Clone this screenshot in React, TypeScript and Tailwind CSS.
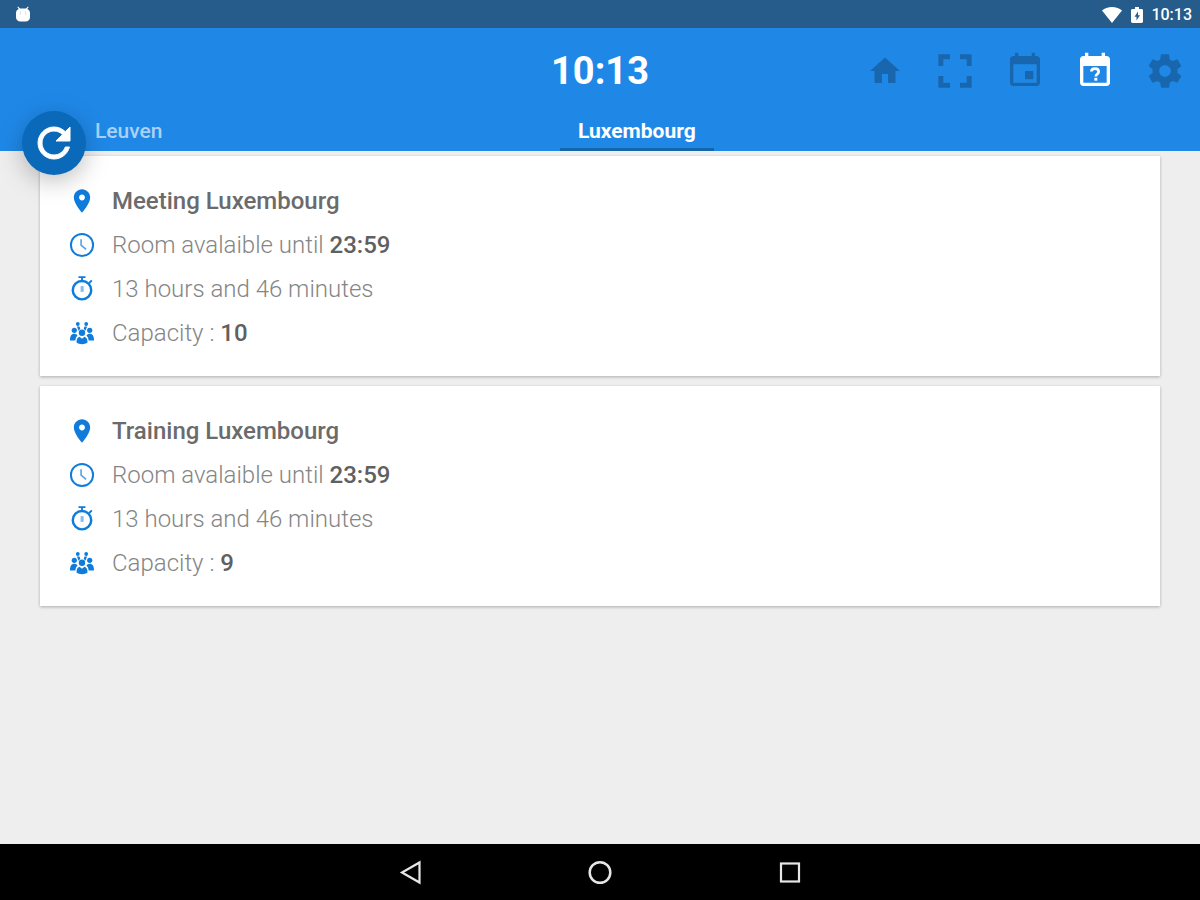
import React from 'react';

interface Room {
  name: string;
  until: string;
  duration: string;
  capacity: number;
}

const rooms: Room[] = [
  { name: 'Meeting Luxembourg', until: '23:59', duration: '13 hours and 46 minutes', capacity: 10 },
  { name: 'Training Luxembourg', until: '23:59', duration: '13 hours and 46 minutes', capacity: 9 },
];

const tabs = ['Leuven', 'Luxembourg'];

const Icon: React.FC<{ className: string; children: React.ReactNode }> = ({ className, children }) => (
  <svg viewBox="0 0 24 24" fill="currentColor" aria-hidden="true" className={className}>
    {children}
  </svg>
);

const StatusBar = () => (
  <div className="flex h-7 shrink-0 items-center justify-between bg-[#265c8b] pr-2 pl-[15px] text-white">
    <svg viewBox="0 0 16 16" fill="currentColor" aria-hidden="true" className="size-4">
      <path d="M3 0.5l2 2h6l2-2 .6.8-1.3 1.6C14 3.600 15 5 15 7v4c0 2.800-1.800 4.500-4.500 4.500h-5C2.800 15.500 1 13.800 1 11V7c0-2 1-3.400 2.700-4.100L2.400 1.300z" />
      <path d="M5.500 5v4M10.500 5v4" stroke="#dbe5ed" />
    </svg>
    <div className="flex items-center pt-[2px]">
      <svg viewBox="0 0 20 16" fill="currentColor" aria-hidden="true" className="mr-[9px] h-4 w-5">
        <path d="M10 16L0 3.500C2.600 1.300 6 0 10 0s7.400 1.300 10 3.500z" />
      </svg>
      <svg viewBox="0 0 12 16" fill="currentColor" aria-hidden="true" className="mr-2 h-4 w-3">
        <path d="M4 0h4v2h2.500c.8 0 1.500.6 1.500 1.400v11.200c0 .8-.7 1.400-1.500 1.400h-9C.7 16 0 15.400 0 14.600V3.400C0 2.600.7 2 1.500 2H4z" />
        <path d="M7 4.500L3.500 9.800h2V13.500L9 8.200H7z" fill="#265c8b" />
      </svg>
      <span className="text-[16px] font-medium">10:13</span>
    </div>
  </div>
);

const actions = [
  {
    label: 'Home',
    active: false,
    icon: (
      <Icon className="size-9">
        <path d="M10 20v-6h4v6h5v-8h3L12 3 2 12h3v8z" />
      </Icon>
    ),
  },
  {
    label: 'Full screen',
    active: false,
    icon: (
      <Icon className="size-10">
        <path d="M2 2h7v3H5v4H2zM15 2h7v7h-3V5h-4zM2 15h3v4h4v3H2zM19 15h3v7h-7v-3h4z" />
      </Icon>
    ),
  },
  {
    label: 'Event',
    active: false,
    icon: (
      <Icon className="size-10">
        <path d="M17 12h-5v5h5v-5zM16 1v2H8V1H6v2H5c-1.110 0-1.990.9-1.990 2L3 19c0 1.100.89 2 2 2h14c1.100 0 2-.9 2-2V5c0-1.100-.9-2-2-2h-1V1h-2zm3 18H5V8h14v11z" />
      </Icon>
    ),
  },
  {
    label: 'Available rooms',
    active: true,
    icon: (
      <Icon className="size-10">
        <path d="M16 1v2H8V1H6v2H5c-1.110 0-1.990.9-1.990 2L3 19c0 1.100.89 2 2 2h14c1.100 0 2-.9 2-2V5c0-1.100-.9-2-2-2h-1V1h-2zm3 18H5V9h14v10z" />
        <path d="M9.800 12.300c.1-1.100 1-1.700 2.200-1.700s2.200.7 2.200 1.800c0 1.300-1.700 1.400-1.700 2.900" fill="none" stroke="currentColor" strokeWidth="1.600" />
        <path d="M11.600 16.100h1.800v1.700h-1.800z" />
      </Icon>
    ),
  },
  {
    label: 'Settings',
    active: false,
    icon: (
      <Icon className="size-10">
        <path d="M19.430 12.980c.04-.32.07-.64.07-.98s-.03-.66-.07-.98l2.110-1.650c.19-.15.24-.42.12-.64l-2-3.460c-.12-.22-.39-.3-.61-.22l-2.490 1c-.52-.4-1.080-.73-1.690-.98l-.38-2.650C14.460 2.180 14.250 2 14 2h-4c-.25 0-.46.18-.49.42l-.38 2.650c-.61.25-1.170.59-1.690.98l-2.490-1c-.23-.09-.49 0-.61.22l-2 3.460c-.13.22-.07.49.12.64l2.110 1.650c-.04.32-.07.65-.07.98s.03.66.07.98l-2.110 1.650c-.19.15-.24.42-.12.64l2 3.460c.12.22.39.3.61.22l2.490-1c.52.4 1.080.73 1.690.98l.38 2.650c.03.24.24.42.49.42h4c.25 0 .46-.18.49-.42l.38-2.650c.61-.25 1.170-.59 1.690-.98l2.490 1c.23.09.49 0 .61-.22l2-3.460c.12-.22.07-.49-.12-.64l-2.110-1.650zM12 15.500c-1.930 0-3.500-1.570-3.500-3.500s1.570-3.500 3.500-3.500 3.500 1.570 3.500 3.500-1.570 3.500-3.500 3.500z" />
      </Icon>
    ),
  },
];

const Header = () => (
  <header className="relative z-10 shrink-0 bg-[#1f88e7] text-white">
    <div className="grid h-[86px] grid-cols-[1fr_auto_1fr] items-center">
      <h1 className="col-start-2 text-[38px] leading-10 font-bold">10:13</h1>
      <div className="flex justify-end">
        {actions.map((action) => (
          <button
            key={action.label}
            type="button"
            aria-label={action.label}
            className={`flex h-12 w-[70px] items-center justify-center ${action.active ? 'text-white' : 'text-[#1867ae]'}`}
          >
            {action.icon}
          </button>
        ))}
      </div>
    </div>

    <nav className="grid grid-cols-[43%_auto] pl-[77px]">
      {tabs.map((tab) => (
        <a
          key={tab}
          href={`#${tab}`}
          className={`h-[37px] justify-self-start border-b-[3px] px-[18px] text-[21px] leading-[34px] ${
            tab === 'Luxembourg' ? 'border-[#1565ab] font-bold text-white' : 'border-transparent font-medium text-[#a9d1f6]'
          }`}
        >
          {tab}
        </a>
      ))}
    </nav>

    {/* floating refresh button, overlaps the list */}
    <button
      type="button"
      aria-label="Refresh"
      className="absolute -bottom-6 left-[22px] flex size-16 items-center justify-center rounded-full bg-[#0b69ba] shadow-[0_6px_24px_rgba(0,0,0,0.25)]"
    >
      <Icon className="size-12">
        <path d="M17.650 6.350C16.200 4.900 14.210 4 12 4c-4.420 0-7.990 3.580-7.990 8s3.570 8 7.990 8c3.730 0 6.840-2.550 7.730-6h-2.080c-.82 2.330-3.040 4-5.650 4-3.310 0-6-2.690-6-6s2.690-6 6-6c1.660 0 3.140.69 4.220 1.780L13 11h7V4l-2.350 2.350z" stroke="currentColor" strokeWidth="0.500" />
      </Icon>
    </button>
  </header>
);

const PinIcon = () => (
  <Icon className="size-7">
    <path d="M12 2C8.130 2 5 5.130 5 9c0 5.250 7 13 7 13s7-7.750 7-13c0-3.870-3.130-7-7-7zm0 9.500c-1.380 0-2.500-1.120-2.500-2.500s1.120-2.500 2.500-2.500 2.500 1.120 2.500 2.500-1.120 2.500-2.500 2.500z" />
  </Icon>
);

const ClockIcon = () => (
  <Icon className="size-7">
    <circle cx="12" cy="12" r="9.500" fill="none" stroke="currentColor" strokeWidth="1.700" />
    <path d="M11.200 7v5.200l4.300 3.600" fill="none" stroke="currentColor" strokeWidth="1.400" opacity="0.7" />
  </Icon>
);

const TimerIcon = () => (
  <Icon className="size-7">
    <circle cx="12" cy="13" r="7.900" fill="none" stroke="currentColor" strokeWidth="2.100" />
    <path d="M9 1h6v1.600H9zM11.200 2.600h1.600v2h-1.600zM17.600 6.200l2.200-2.200 1.200 1.200L18.800 7.400z" />
    <path d="M10.800 9.500h2.600v5h-2.600z" opacity="0.5" />
  </Icon>
);

const PeopleIcon = () => (
  <Icon className="size-6">
    <circle cx="7.800" cy="3" r="1.900" />
    <circle cx="16.200" cy="3" r="1.900" />
    <path d="M6.900 5.400h2.600l.8 2.400-1.700 1.900zM17.100 5.400h-2.600l-.8 2.400 1.700 1.900z" />
    <circle cx="4.300" cy="9.300" r="2.600" />
    <circle cx="19.700" cy="9.300" r="2.600" />
    <circle cx="12" cy="11.800" r="3.200" />
    <path d="M0 19.500c0-4 1.300-6.700 4.300-6.700 1.500 0 2.500.7 3.200 1.900-1.500 1.200-2 2.800-2.100 4.800zM24 19.500c0-4-1.300-6.700-4.300-6.700-1.500 0-2.500.7-3.200 1.900 1.500 1.200 2 2.800 2.100 4.800z" />
    <path d="M6.500 21.500c0-3.200 1-5.200 3-5.700l2.500 2 2.500-2c2 .5 3 2.500 3 5.700-1.500 1.300-3.300 1.700-5.500 1.700s-4-.4-5.500-1.700z" />
  </Icon>
);

const Row: React.FC<{ icon: React.ReactNode; children: React.ReactNode }> = ({ icon, children }) => (
  <div className="flex h-11 items-center gap-4">
    <span className="flex w-7 justify-center text-[#0f7cdc]">{icon}</span>
    {children}
  </div>
);

const RoomCard: React.FC<{ room: Room }> = ({ room }) => (
  <article className="bg-white px-7 pt-[23px] pb-[21px] text-[24px] leading-8 font-light text-[#858585] shadow-[0_1px_3px_rgba(0,0,0,0.28)]">
    <Row icon={<PinIcon />}>
      <h2 className="font-medium text-[#6b6b6b]">{room.name}</h2>
    </Row>
    <Row icon={<ClockIcon />}>
      <p>
        Room avalaible until <strong className="font-medium text-[#606060]">{room.until}</strong>
      </p>
    </Row>
    <Row icon={<TimerIcon />}>
      <p>{room.duration}</p>
    </Row>
    <Row icon={<PeopleIcon />}>
      <p>
        Capacity : <strong className="font-medium text-[#606060]">{room.capacity}</strong>
      </p>
    </Row>
  </article>
);

const NavigationBar = () => (
  <footer className="flex h-14 shrink-0 items-center justify-center gap-[162px] bg-black text-[#e6e6e6]">
    <button type="button" aria-label="Back">
      <svg viewBox="0 0 28 28" fill="none" stroke="currentColor" strokeWidth="2.200" aria-hidden="true" className="size-7">
        <path d="M23.500 4.500v20L6 14.500z" />
      </svg>
    </button>
    <button type="button" aria-label="Home">
      <svg viewBox="0 0 28 28" fill="none" stroke="currentColor" strokeWidth="2.500" aria-hidden="true" className="size-7">
        <circle cx="14" cy="14.500" r="10.300" />
      </svg>
    </button>
    <button type="button" aria-label="Recent apps">
      <svg viewBox="0 0 28 28" fill="none" stroke="currentColor" strokeWidth="2.200" aria-hidden="true" className="size-7">
        <rect x="5" y="5.500" width="18" height="18" />
      </svg>
    </button>
  </footer>
);

export default function App() {
  return (
    <div className="flex min-h-screen flex-col bg-[#eeeeee] font-[Roboto,sans-serif]">
      <StatusBar />
      <Header />
      <main className="flex grow flex-col gap-[10px] px-10 pt-[5px] pb-10">
        {rooms.map((room) => (
          <RoomCard key={room.name} room={room} />
        ))}
      </main>
      <NavigationBar />
    </div>
  );
}
